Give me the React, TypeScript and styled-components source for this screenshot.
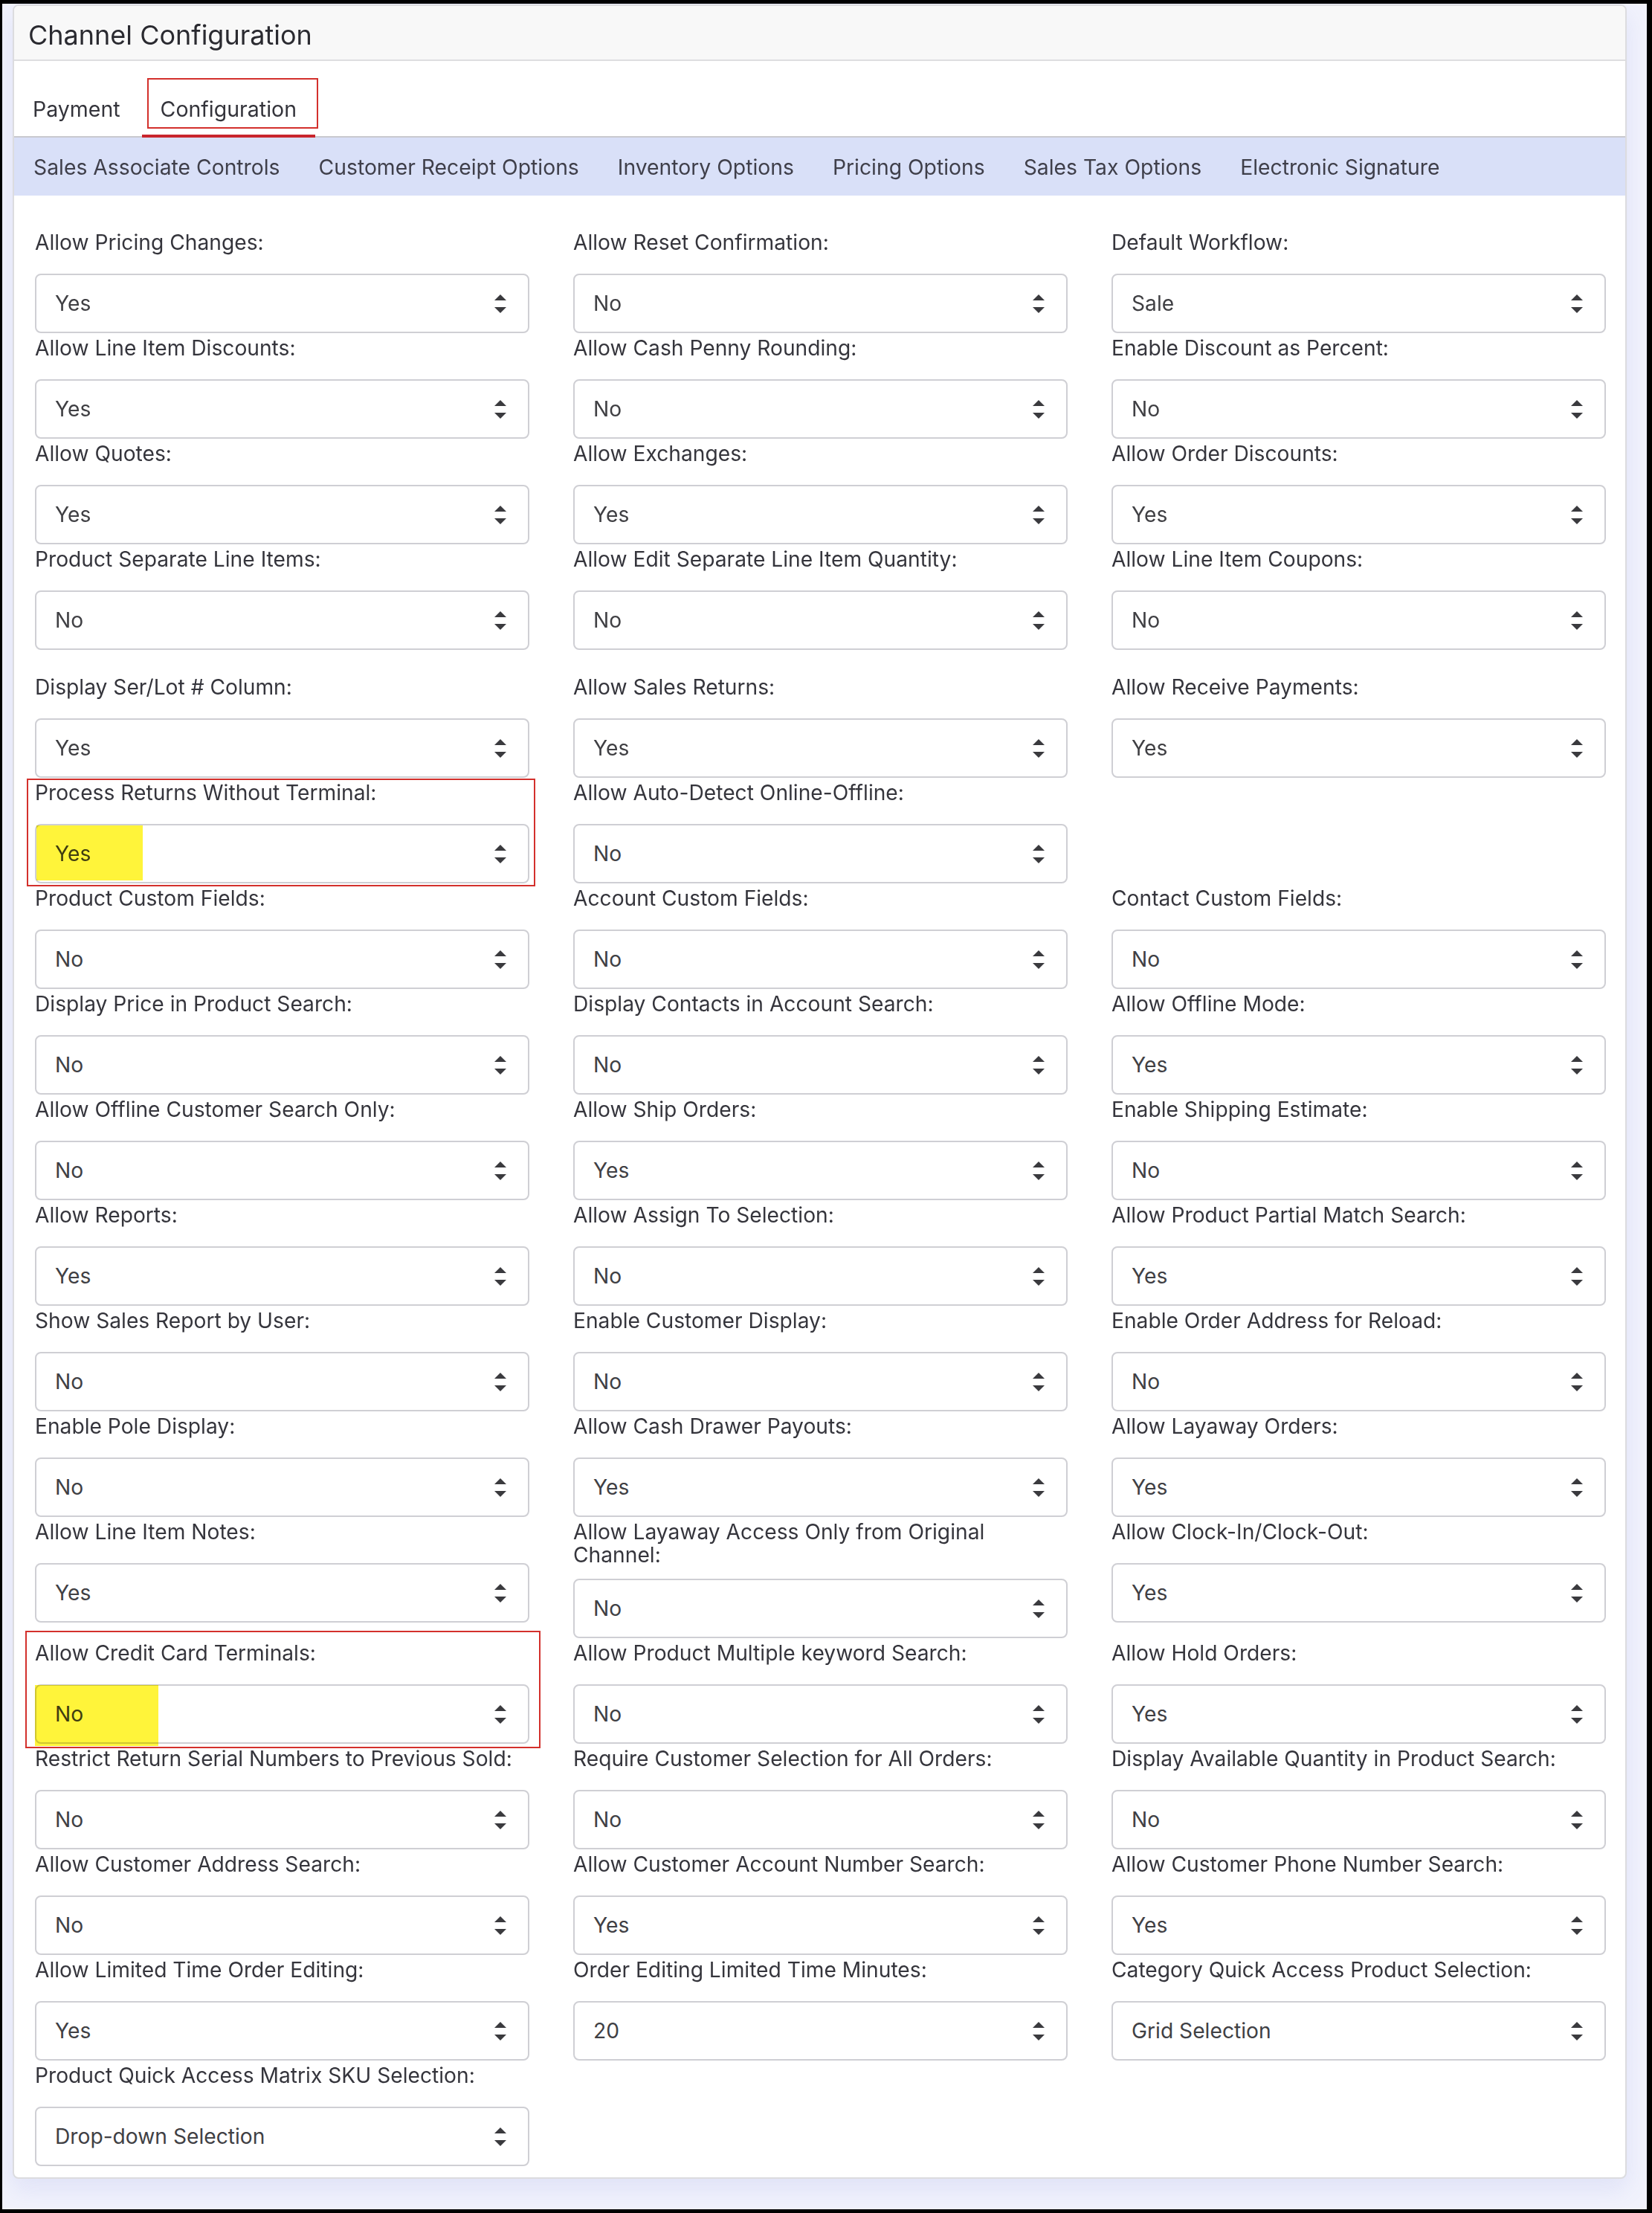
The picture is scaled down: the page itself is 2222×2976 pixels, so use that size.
import React from "react";
import styled, { createGlobalStyle } from "styled-components";

const GlobalStyle = createGlobalStyle`
  html, body {
    margin: 0;
    padding: 0;
    background: #000;
  }
  body {
    font-family: Inter, "Noto Sans", "Liberation Sans", sans-serif;
    -webkit-font-smoothing: antialiased;
  }
  * {
    box-sizing: border-box;
  }
`;

const Frame = styled.div`
  margin: 5px 7px 2px 3px;
  background: #f1f2fc;
  padding: 1px 27px 41px 14px;
`;

const Card = styled.section`
  background: #fff;
  border: 2px solid #dcdcdf;
  border-radius: 8px;
  box-shadow: 0 14px 30px rgba(110, 120, 220, 0.13);
`;

const Header = styled.header`
  height: 74px;
  display: flex;
  align-items: center;
  padding: 6px 19px 0;
  background: #f8f8f8;
  border-bottom: 2px solid #dedee0;
  border-radius: 6px 6px 0 0;
  font-size: 36px;
  color: #2a2a30;
`;

const TabsRow = styled.nav`
  display: flex;
  align-items: flex-end;
  height: 103px;
  border-bottom: 2px solid #c9c9cf;
`;

const Tab = styled.div<{ $active?: boolean }>`
  position: relative;
  height: 78px;
  padding: 6px 25px 0;
  margin-right: 4px;
  margin-bottom: -2px;
  line-height: 68px;
  font-size: 28.5px;
  color: #34343b;
  border-bottom: 4px solid ${(p) => (p.$active ? "#c9252c" : "transparent")};
`;

const Callout = styled.span<{ $t: number; $r: number; $b: number; $l: number }>`
  position: absolute;
  top: ${(p) => p.$t}px;
  right: ${(p) => p.$r}px;
  bottom: ${(p) => p.$b}px;
  left: ${(p) => p.$l}px;
  border: 2px solid #d3302c;
  pointer-events: none;
`;

const SubNav = styled.div`
  display: flex;
  align-items: center;
  height: 78px;
  padding-top: 2px;
  background: #d9e0f8;
`;

const SubNavItem = styled.span`
  padding: 0 26px;
  font-size: 28.3px;
  color: #3f3f4a;
`;

const Form = styled.div`
  padding: 48px 26px 15px 28px;
`;

const FieldRow = styled.div<{ $gap: number }>`
  display: grid;
  grid-template-columns: repeat(3, 1fr);
  column-gap: 59px;
  align-items: start;
  margin-top: ${(p) => p.$gap}px;
`;

const Field = styled.div`
  position: relative;
  display: flex;
  flex-direction: column;
`;

const Label = styled.label`
  min-height: 41px;
  margin-bottom: 16px;
  font-size: 28.2px;
  line-height: 31px;
  color: #35353c;
  white-space: pre-line;
`;

const SelectBox = styled.div`
  position: relative;
  height: 80px;
  display: flex;
  align-items: center;
  justify-content: space-between;
  padding: 0 29px 0 25px;
  border: 2px solid #cfcfd4;
  border-radius: 8px;
  background: #fff;
  font-size: 28.2px;
  color: #404044;
`;

const Marker = styled.span<{ $t: number; $b: number; $l: number; $w: number }>`
  position: absolute;
  top: ${(p) => p.$t}px;
  bottom: ${(p) => p.$b}px;
  left: ${(p) => p.$l}px;
  width: ${(p) => p.$w}px;
  background: #fff43a;
  mix-blend-mode: multiply;
  pointer-events: none;
`;

const Caret = () => (
  <svg width="16" height="25" viewBox="0 0 16 25">
    <path d="M8 0 L16 8 L0 8 Z" fill="#3a3a3e" />
    <path d="M0 17 L16 17 L8 25 Z" fill="#3a3a3e" />
  </svg>
);

type Mark = { box: [number, number, number, number]; hl: [number, number, number, number] };

type Cell = { label: string; value: string; mark?: Mark } | null;

const ROWS: { gap: number; cells: Cell[] }[] = [
  {
    gap: 0,
    cells: [
      { label: "Allow Pricing Changes:", value: "Yes" },
      { label: "Allow Reset Confirmation:", value: "No" },
      { label: "Default Workflow:", value: "Sale" },
    ],
  },
  {
    gap: 5,
    cells: [
      { label: "Allow Line Item Discounts:", value: "Yes" },
      { label: "Allow Cash Penny Rounding:", value: "No" },
      { label: "Enable Discount as Percent:", value: "No" },
    ],
  },
  {
    gap: 5,
    cells: [
      { label: "Allow Quotes:", value: "Yes" },
      { label: "Allow Exchanges:", value: "Yes" },
      { label: "Allow Order Discounts:", value: "Yes" },
    ],
  },
  {
    gap: 5,
    cells: [
      { label: "Product Separate Line Items:", value: "No" },
      { label: "Allow Edit Separate Line Item Quantity:", value: "No" },
      { label: "Allow Line Item Coupons:", value: "No" },
    ],
  },
  {
    gap: 35,
    cells: [
      { label: "Display Ser/Lot # Column:", value: "Yes" },
      { label: "Allow Sales Returns:", value: "Yes" },
      { label: "Allow Receive Payments:", value: "Yes" },
    ],
  },
  {
    gap: 5,
    cells: [
      {
        label: "Process Returns Without Terminal:",
        value: "Yes",
        mark: { box: [-4, -8, -4, -11], hl: [0, 0, 2, 143] },
      },
      { label: "Allow Auto-Detect Online-Offline:", value: "No" },
      null,
    ],
  },
  {
    gap: 5,
    cells: [
      { label: "Product Custom Fields:", value: "No" },
      { label: "Account Custom Fields:", value: "No" },
      { label: "Contact Custom Fields:", value: "No" },
    ],
  },
  {
    gap: 5,
    cells: [
      { label: "Display Price in Product Search:", value: "No" },
      { label: "Display Contacts in Account Search:", value: "No" },
      { label: "Allow Offline Mode:", value: "Yes" },
    ],
  },
  {
    gap: 5,
    cells: [
      { label: "Allow Offline Customer Search Only:", value: "No" },
      { label: "Allow Ship Orders:", value: "Yes" },
      { label: "Enable Shipping Estimate:", value: "No" },
    ],
  },
  {
    gap: 5,
    cells: [
      { label: "Allow Reports:", value: "Yes" },
      { label: "Allow Assign To Selection:", value: "No" },
      { label: "Allow Product Partial Match Search:", value: "Yes" },
    ],
  },
  {
    gap: 5,
    cells: [
      { label: "Show Sales Report by User:", value: "No" },
      { label: "Enable Customer Display:", value: "No" },
      { label: "Enable Order Address for Reload:", value: "No" },
    ],
  },
  {
    gap: 5,
    cells: [
      { label: "Enable Pole Display:", value: "No" },
      { label: "Allow Cash Drawer Payouts:", value: "Yes" },
      { label: "Allow Layaway Orders:", value: "Yes" },
    ],
  },
  {
    gap: 5,
    cells: [
      { label: "Allow Line Item Notes:", value: "Yes" },
      { label: "Allow Layaway Access Only from Original\nChannel:", value: "No" },
      { label: "Allow Clock-In/Clock-Out:", value: "Yes" },
    ],
  },
  {
    gap: 5,
    cells: [
      {
        label: "Allow Credit Card Terminals:",
        value: "No",
        mark: { box: [-15, -15, -6, -13], hl: [-1, -2, -5, 166] },
      },
      { label: "Allow Product Multiple keyword Search:", value: "No" },
      { label: "Allow Hold Orders:", value: "Yes" },
    ],
  },
  {
    gap: 5,
    cells: [
      { label: "Restrict Return Serial Numbers to Previous Sold:", value: "No" },
      { label: "Require Customer Selection for All Orders:", value: "No" },
      { label: "Display Available Quantity in Product Search:", value: "No" },
    ],
  },
  {
    gap: 5,
    cells: [
      { label: "Allow Customer Address Search:", value: "No" },
      { label: "Allow Customer Account Number Search:", value: "Yes" },
      { label: "Allow Customer Phone Number Search:", value: "Yes" },
    ],
  },
  {
    gap: 5,
    cells: [
      { label: "Allow Limited Time Order Editing:", value: "Yes" },
      { label: "Order Editing Limited Time Minutes:", value: "20" },
      { label: "Category Quick Access Product Selection:", value: "Grid Selection" },
    ],
  },
  {
    gap: 5,
    cells: [
      { label: "Product Quick Access Matrix SKU Selection:", value: "Drop-down Selection" },
      null,
      null,
    ],
  },
];

const SUBNAV = [
  "Sales Associate Controls",
  "Customer Receipt Options",
  "Inventory Options",
  "Pricing Options",
  "Sales Tax Options",
  "Electronic Signature",
];

function SettingField({ cell }: { cell: Cell }) {
  if (!cell) return <div />;
  const { label, value, mark } = cell;
  return (
    <Field>
      <Label>{label}</Label>
      <SelectBox>
        <span>{value}</span>
        <Caret />
        {mark && <Marker $t={mark.hl[0]} $l={mark.hl[1]} $b={mark.hl[2]} $w={mark.hl[3]} />}
      </SelectBox>
      {mark && <Callout $t={mark.box[0]} $r={mark.box[1]} $b={mark.box[2]} $l={mark.box[3]} />}
    </Field>
  );
}

export default function App() {
  return (
    <>
      <GlobalStyle />
      <Frame>
        <Card>
          <Header>Channel Configuration</Header>
          <TabsRow>
            <Tab>Payment</Tab>
            <Tab $active>
              Configuration
              <Callout $t={-2} $r={-4} $b={8} $l={7} />
            </Tab>
          </TabsRow>
          <SubNav>
            {SUBNAV.map((s) => (
              <SubNavItem key={s}>{s}</SubNavItem>
            ))}
          </SubNav>
          <Form>
            {ROWS.map((row, i) => (
              <FieldRow key={i} $gap={row.gap}>
                {row.cells.map((c, j) => (
                  <SettingField key={j} cell={c} />
                ))}
              </FieldRow>
            ))}
          </Form>
        </Card>
      </Frame>
    </>
  );
}
